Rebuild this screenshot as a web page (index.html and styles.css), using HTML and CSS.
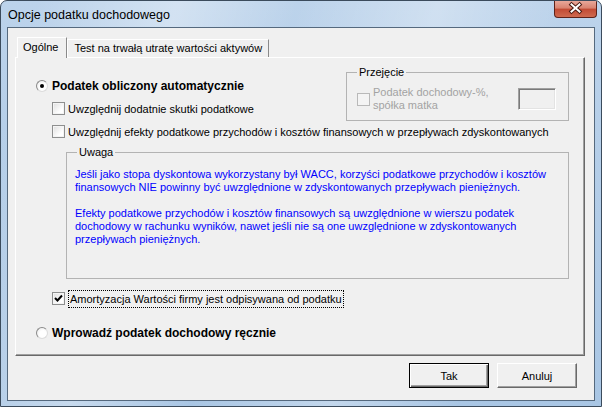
FILE: index.html
```html
<!DOCTYPE html>
<html lang="pl">
<head>
    <meta charset="UTF-8">
    <meta name="viewport" content="width=device-width, initial-scale=1.0">
    <title>Opcje podatku dochodowego</title>
    <link rel="stylesheet" href="styles.css">
</head>
<body>

    <div class="window">
        <div class="titlebar">
            <span class="title">Opcje podatku dochodowego</span>
            <div class="close-btn">
                <svg width="43" height="17" viewBox="0 0 43 17">
                    <path d="M17.5 4.5 L25.5 11.5 M25.5 4.5 L17.5 11.5" stroke="#4a1a12" stroke-width="4" stroke-linecap="square" fill="none"/>
                    <path d="M17.5 4.5 L25.5 11.5 M25.5 4.5 L17.5 11.5" stroke="#fff" stroke-width="2" stroke-linecap="square" fill="none"/>
                </svg>
            </div>
        </div>

        <div class="client">
            <div class="tabs">
                <div class="tab tab-active">Ogólne</div>
                <div class="tab">Test na trwałą utratę wartości aktywów</div>
            </div>

            <div class="panel">
                <div class="top-block">
                    <div class="top-left">
                        <div class="row">
                            <span class="radio checked"></span>
                            <span class="bold">Podatek obliczony automatycznie</span>
                        </div>
                        <div class="row indent">
                            <span class="checkbox"></span>
                            <span>Uwzględnij dodatnie skutki podatkowe</span>
                        </div>
                    </div>
                    <fieldset class="group group-takeover">
                        <legend>Przejęcie</legend>
                        <div class="takeover-row">
                            <span class="checkbox disabled"></span>
                            <span class="disabled-text">Podatek dochodowy-%,<br>spółka matka</span>
                            <span class="textbox"></span>
                        </div>
                    </fieldset>
                </div>

                <div class="row indent">
                    <span class="checkbox"></span>
                    <span>Uwzględnij efekty podatkowe przychodów i kosztów finansowych w przepływach zdyskontowanych</span>
                </div>

                <fieldset class="group group-note">
                    <legend>Uwaga</legend>
                    <p class="note">Jeśli jako stopa dyskontowa wykorzystany był WACC, korzyści podatkowe przychodów i kosztów<br>finansowych NIE powinny być uwzględnione w zdyskontowanych przepływach pieniężnych.</p>
                    <p class="note">Efekty podatkowe przychodów i kosztów finansowych są uwzględnione w wierszu podatek<br>dochodowy w rachunku wyników, nawet jeśli nie są one uwzględnione w zdyskontowanych<br>przepływach pieniężnych.</p>
                </fieldset>

                <div class="row indent row-amort">
                    <span class="checkbox">
                        <svg width="11" height="11" viewBox="0 0 11 11">
                            <path d="M2 5 L4.5 7.5 L9 2.5" stroke="#000" stroke-width="2" fill="none"/>
                        </svg>
                    </span>
                    <span class="focus">Amortyzacja Wartości firmy jest odpisywana od podatku</span>
                </div>

                <div class="row row-manual">
                    <span class="radio"></span>
                    <span class="bold">Wprowadź podatek dochodowy ręcznie</span>
                </div>
            </div>

            <div class="buttons">
                <button class="btn btn-default">Tak</button>
                <button class="btn">Anuluj</button>
            </div>
        </div>
    </div>

</body>
</html>
```

FILE: styles.css
```css
body {
    margin: 0;
    font-family: "Liberation Sans", Arial, sans-serif;
    font-size: 11px;
    color: #000;
}

.window {
    width: 602px;
    height: 407px;
    box-sizing: border-box;
    border: 1px solid #3b4b5c;
    border-radius: 7px 7px 0 0;
    background:
        linear-gradient(105deg, rgba(255,255,255,0) 5%, rgba(255,255,255,.35) 25%, rgba(255,255,255,0) 42%, rgba(255,255,255,.3) 62%, rgba(255,255,255,0) 80%),
        linear-gradient(#bcd3eb, #a9c6e4);
    overflow: hidden;
}

/* title bar */
.titlebar {
    height: 26px;
    display: flex;
    align-items: flex-start;
}
.title {
    font-size: 12.5px;
    line-height: 14px;
    margin: 7px 0 0 7px;
}
.close-btn {
    margin-left: auto;
    margin-right: 4px;
    width: 43px;
    height: 17px;
    box-sizing: border-box;
    border: 1px solid #5e2219;
    border-top: none;
    border-radius: 0 0 4px 4px;
    background: linear-gradient(#e9a89a, #d9826f 45%, #c24a33 50%, #cf6a4f);
}
.close-btn svg {
    display: block;
    margin: -1px 0 0 -1px;
}

/* client area */
.client {
    width: 588px;
    height: 374px;
    box-sizing: border-box;
    margin-left: 6px;
    border: 1px solid #55697e;
    background: #f0f0f0;
    padding-top: 9px;
}

.tabs {
    display: flex;
    align-items: flex-end;
    height: 20px;
    margin-left: 9px;
}
.tab {
    height: 18px;
    box-sizing: border-box;
    padding: 0 6px;
    line-height: 16px;
    border: 1px solid;
    border-color: #fff #8a8a8a transparent #fff;
    border-bottom: none;
}
.tab-active {
    height: 21px;
    margin-bottom: -1px;
    padding: 1px 8px 0 5px;
    position: relative;
    z-index: 1;
    background: #f0f0f0;
}

.panel {
    width: 570px;
    height: 299px;
    box-sizing: border-box;
    margin-left: 7px;
    border: 1px solid;
    border-color: #fff #696969 #696969 #fff;
    box-shadow: inset -1px -1px #a0a0a0;
    padding: 16px 15px 0 20px;
}

.top-block {
    display: flex;
    align-items: flex-start;
}
.top-left {
    flex: 1;
}

.row {
    display: flex;
    align-items: center;
    height: 23px;
    white-space: nowrap;
}
.indent {
    padding-left: 16px;
}
.bold {
    font-weight: bold;
    font-size: 12px;
}

.radio {
    width: 12px;
    height: 12px;
    box-sizing: border-box;
    border-radius: 50%;
    border: 1px solid;
    border-color: #8a8a8a #dcdcdc #dcdcdc #8a8a8a;
    background: radial-gradient(circle at 60% 60%, #fff 40%, #e4e4e4);
    margin-right: 4px;
    display: flex;
    align-items: center;
    justify-content: center;
}
.radio.checked::after {
    content: "";
    width: 4px;
    height: 4px;
    border-radius: 50%;
    background: #000;
}

.checkbox {
    width: 13px;
    height: 13px;
    box-sizing: border-box;
    border: 1px solid #8e8f8f;
    background: linear-gradient(135deg, #dedede, #fff 70%);
    box-shadow: inset 0 0 0 1px #f4f4f4;
    margin-right: 3px;
    flex-shrink: 0;
}
.checkbox svg {
    display: block;
}
.checkbox.disabled {
    border-color: #b9b9b9;
    background: #f4f4f4;
    box-shadow: none;
}

/* group boxes */
.group {
    margin: 0;
    min-width: 0;
    box-sizing: border-box;
    border: 1px solid #b3b3b3;
}
.group legend {
    padding: 0 2px;
    line-height: 13px;
}
.group-takeover {
    width: 223px;
    margin: -8px 0 -1px 0;
    padding: 7px 12px 8px 10px;
}
.takeover-row {
    display: flex;
    align-items: center;
}
.disabled-text {
    color: #a3a3a3;
    line-height: 13px;
}
.textbox {
    margin-left: auto;
    width: 38px;
    height: 22px;
    box-sizing: border-box;
    border: 1px solid;
    border-color: #a0a0a0 #fff #fff #a0a0a0;
    box-shadow: inset 1px 1px #7a7a7a, inset -1px -1px #e3e3e3;
}

.group-note {
    height: 133px;
    margin: 3px 0 0 30px;
    padding: 9px 8px 0 8px;
}
.group-note legend {
    margin-left: 2px;
}
.note {
    margin: 0 0 13px;
    color: #0000ff;
    line-height: 13px;
    white-space: nowrap;
}

.row-amort {
    margin-top: 8px;
}
.focus {
    border: 1px dotted #000;
    padding: 0 1px;
    line-height: 16px;
}
.row-manual {
    margin-top: 11px;
}

/* dialog buttons */
.buttons {
    display: flex;
    justify-content: flex-end;
    gap: 8px;
    margin: 7px 17px 0 0;
}
.btn {
    width: 80px;
    height: 25px;
    font-family: "Liberation Sans", Arial, sans-serif;
    font-size: 11px;
    color: #000;
    background: #f0f0f0;
    border: 1px solid;
    border-color: #fff #696969 #696969 #fff;
    box-shadow: inset -1px -1px #a0a0a0;
    padding: 0;
}
.btn-default {
    border: 1px solid #000;
    box-shadow: inset 1px 1px #fff, inset -1px -1px #696969, inset -2px -2px #a0a0a0;
}
```
